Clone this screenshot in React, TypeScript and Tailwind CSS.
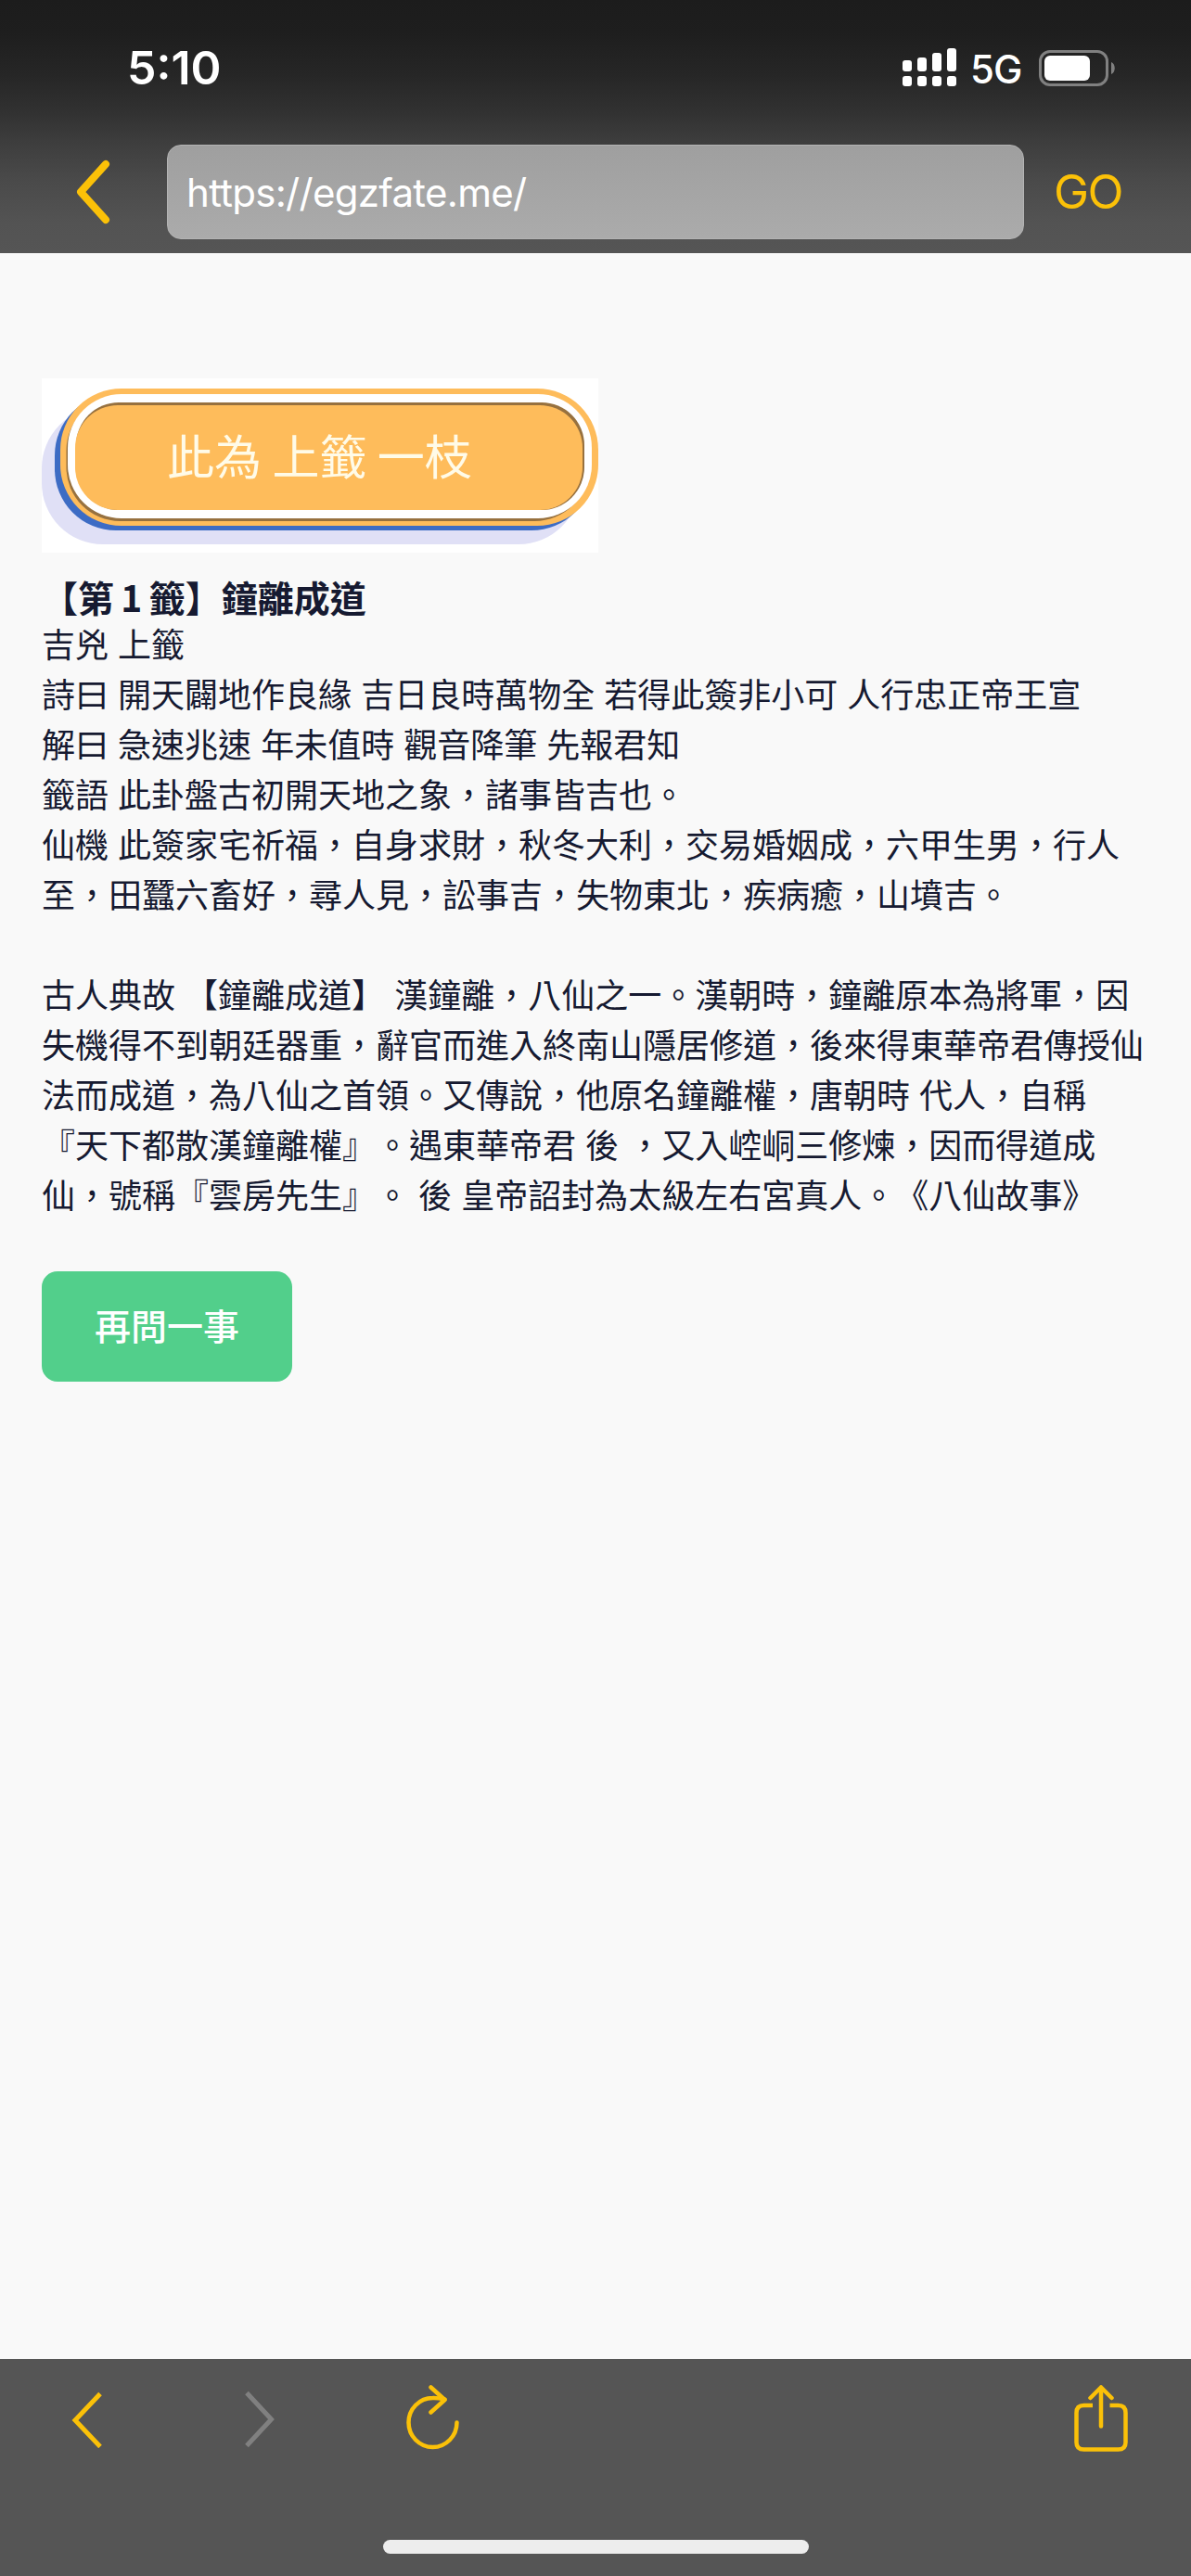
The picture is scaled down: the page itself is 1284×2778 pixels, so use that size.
import React from 'react';

const poemLines = [
    '吉兇 上籤',
    '詩曰 開天闢地作良緣 吉日良時萬物全 若得此簽非小可 人行忠正帝王宣',
    '解曰 急速兆速 年未值時 觀音降筆 先報君知',
    '籤語 此卦盤古初開天地之象，諸事皆吉也。',
    '仙機 此簽家宅祈福，自身求財，秋冬大利，交易婚姻成，六甲生男，行人',
    '至，田蠶六畜好，尋人見，訟事吉，失物東北，疾病癒，山墳吉。',
];

const storyLines = [
    '古人典故 【鐘離成道】 漢鐘離，八仙之一。漢朝時，鐘離原本為將軍，因',
    '失機得不到朝廷器重，辭官而進入終南山隱居修道，後來得東華帝君傳授仙',
    '法而成道，為八仙之首領。又傳說，他原名鐘離權，唐朝時 代人，自稱',
    '『天下都散漢鐘離權』。遇東華帝君 後 ，又入崆峒三修煉，因而得道成',
    '仙，號稱『雲房先生』。 後 皇帝詔封為太級左右宮真人。《八仙故事》',
];

function StatusBar() {
    return (
        <div className="flex h-[146px] items-center justify-between pl-[137px] pr-[82px]">
            <span className="text-[50px] leading-none font-semibold">5:10</span>
            <div className="flex items-center">
                <svg width="58" height="42" viewBox="0 0 58 42" fill="#fff">
                    <rect x="0" y="13" width="10" height="12" rx="3" />
                    <rect x="16" y="10" width="10" height="15" rx="3" />
                    <rect x="32" y="5" width="10" height="20" rx="3" />
                    <rect x="48" y="0" width="10" height="25" rx="3" />
                    <rect x="0" y="30" width="10" height="11" rx="3" />
                    <rect x="16" y="30" width="10" height="11" rx="3" />
                    <rect x="32" y="30" width="10" height="11" rx="3" />
                    <rect x="48" y="30" width="10" height="11" rx="3" />
                </svg>
                <span className="ml-[15px] w-[74px] pt-[3px] text-[42px] leading-none font-medium tracking-[-1px]">5G</span>
                <svg width="82" height="39" viewBox="0 0 82 39">
                    <rect x="1.5" y="1.5" width="72" height="36" rx="10.5" fill="none" stroke="#808080" strokeWidth="3" />
                    <rect x="6" y="6" width="49" height="27" rx="6" fill="#fff" />
                    <path d="M78 13c5 2 5 11 0 13z" fill="#808080" />
                </svg>
            </div>
        </div>
    );
}

function AddressBar() {
    return (
        <div className="mt-[10px] flex h-[102px] items-center">
            <button className="flex w-[180px] pl-[82px]">
                <svg width="38" height="70" viewBox="0 0 38 70" fill="none" stroke="#fbc108" strokeWidth="8" strokeLinecap="round" strokeLinejoin="round">
                    <path d="M32 5 5 35l27 30" />
                </svg>
            </button>
            <div className="flex h-full w-[924px] items-center rounded-[15px] border border-[#b4b4b4] bg-linear-to-b from-[#9f9f9f] to-[#ababab] pl-[20px] text-[42px] tracking-[-0.7px]">
                https://egzfate.me/
            </div>
            <button className="ml-[32px] text-[51px] tracking-[-1.5px] text-[#fbc108]">GO</button>
        </div>
    );
}

function ResultBanner() {
    return (
        <svg className="block bg-white" width="600" height="188" viewBox="0 0 600 188">
            <rect x="0" y="31" width="580" height="148" rx="66" fill="#e0e0f6" />
            <rect x="14" y="17" width="580" height="147" rx="66" fill="#3d6cc4" />
            <rect x="20" y="11" width="580" height="148" rx="66" fill="#febc5b" />
            <rect x="26.5" y="20" width="563" height="134" rx="58" fill="#97713f" />
            <rect x="28" y="17" width="565" height="134" rx="58" fill="#fff" />
            <rect x="37" y="26" width="548" height="116" rx="46" fill="#97713f" />
            <rect x="36" y="29" width="547" height="113" rx="46" fill="#febc5b" />
            <text x="135" y="104" fill="#fffbe8" className="text-[51px] font-normal">此為 上籤 一枝</text>
        </svg>
    );
}

function Toolbar() {
    return (
        <footer className="h-[234px] bg-[#555]">
            <div className="flex h-[195px] items-start pt-[28px] pl-[77px] pr-[68px]">
                <svg className="mt-[6px]" width="34" height="62" viewBox="0 0 34 62" fill="none" stroke="#fbc108" strokeWidth="5">
                    <path d="M31 3.5 4 32l27 28.500" />
                </svg>
                <svg className="ml-[152px] mt-[6px]" width="34" height="62" viewBox="0 0 34 62" fill="none" stroke="#808080" strokeWidth="5">
                    <path d="M3 2.500 29.500 31 3 59.500" />
                </svg>
                <svg className="ml-[141px]" width="58" height="70" viewBox="0 0 58 70" fill="none" stroke="#fbc108" strokeWidth="4.500" strokeLinecap="round" strokeLinejoin="round">
                    <path d="M54.500 40.500A26 26.500 0 1 1 28.500 14Q34 13.800 41.500 15.500" />
                    <path d="M26.500 2.500 41.500 16 26.500 29.500" />
                </svg>
                <svg className="ml-auto" width="58" height="72" viewBox="0 0 58 72" fill="none" stroke="#fbc108" strokeWidth="4.500" strokeLinecap="round" strokeLinejoin="round">
                    <path d="M20 22h-9.500q-8 0-8 8v32q0 7.500 8 7.500h37q8 0 8-7.500v-32q0-8-8-8h-9" strokeLinecap="butt" />
                    <path d="M29 44.500V2.500M17.500 14 29 2.500 40.500 14" />
                </svg>
            </div>
            <div className="mx-auto h-[15px] w-[459px] rounded-full bg-[#ededed]" />
        </footer>
    );
}

export default function App() {
    return (
        <div className="flex h-[2778px] w-[1284px] flex-col bg-[#f9f9f9] font-[Inter,'Noto_Sans_CJK_TC',sans-serif] text-white">
            <header className="h-[273px] bg-[linear-gradient(#1c1c1c_0px,#1e1e1e_35px,#262626_80px,#313131_120px,#3e3e3e_155px,#4a4a4a_195px,#535353_240px,#555_273px)]">
                <StatusBar />
                <AddressBar />
            </header>

            <main className="flex-1 px-[45px] pt-[135px] font-['Noto_Sans_CJK_TC',sans-serif] text-[#161a31] [text-spacing-trim:space-all]" lang="zh-Hant">
                <ResultBanner />
                <h1 className="mt-[25px] h-[45px] text-[39px] leading-[45px] font-bold whitespace-nowrap [word-spacing:-1.5px]">【第 1 籤】鐘離成道</h1>
                <div className="text-[36px] leading-[54px] whitespace-nowrap [word-spacing:2px]">
                    {poemLines.map(line => (
                        <p key={line}>{line}</p>
                    ))}
                    <div className="h-[54px]" />
                    {storyLines.map(line => (
                        <p key={line}>{line}</p>
                    ))}
                </div>
                <button className="mt-[57px] h-[119px] w-[270px] rounded-[17px] bg-[#52cf8b] pb-[4px] text-[39px] font-medium text-white">
                    再問一事
                </button>
            </main>

            <Toolbar />
        </div>
    );
}
